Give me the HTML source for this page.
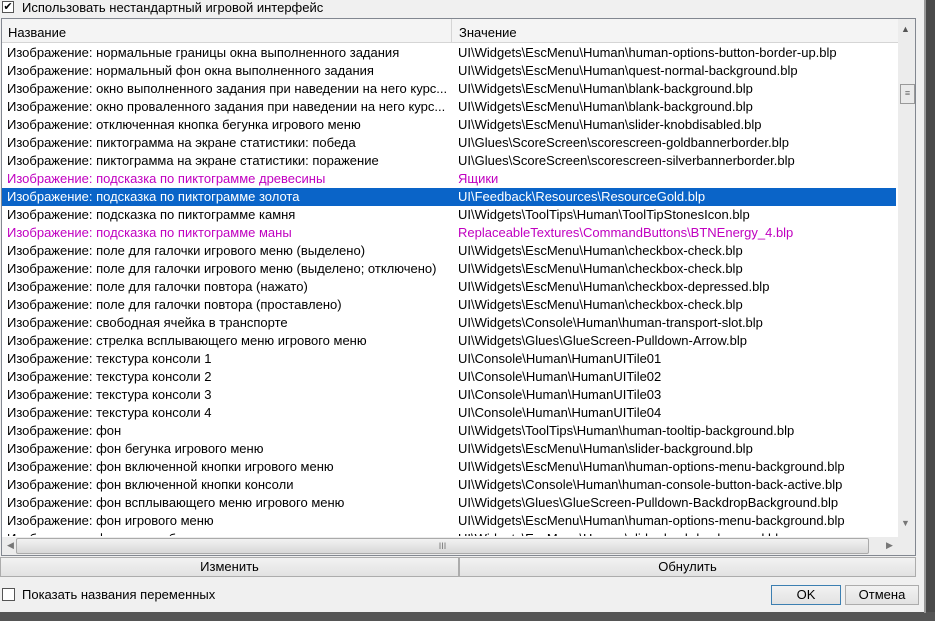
<!DOCTYPE html>
<html><head><meta charset="utf-8"><style>
*{box-sizing:border-box;margin:0;padding:0}
body{width:935px;height:621px;background:#f0f0f0;font-family:"Liberation Sans","DejaVu Sans",sans-serif;font-size:13px;color:#000;position:relative;overflow:hidden}
.abs{position:absolute}
.row{position:absolute;left:2px;width:894px;height:18px;line-height:18px;white-space:nowrap}
.row span{position:absolute}
.row .a{left:5px}.row .b{left:456px}
.m{color:#c000c0}
.sel{background:#0a64c8;color:#fff}
.btn{position:absolute;border:1px solid #acacac;background:linear-gradient(#f2f2f2,#e2e2e2);text-align:center;line-height:18px}
</style></head><body>
<div class="abs" style="left:926px;top:0;width:9px;height:621px;background:#4a4a4a"></div>
<div class="abs" style="left:0;top:612px;width:935px;height:9px;background:#555"></div>
<div class="abs" style="left:924px;top:0;width:2px;height:613px;background:#999"></div>
<div class="abs" style="left:2px;top:1px;width:12px;height:12px;border:1px solid #555;background:#fff;font-size:11px;line-height:10px;text-align:center">✔</div>
<div class="abs" style="left:22px;top:0;line-height:15px">Использовать нестандартный игровой интерфейс</div>
<div class="abs" style="left:1px;top:18px;width:915px;height:538px;border:1px solid #828790;background:#fff;overflow:hidden">
 <div class="abs" style="left:0;top:0;width:896px;height:24px;background:#f4f4f4;border-bottom:1px solid #d5d5d5"></div>
 <div class="abs" style="left:6px;top:6px">Название</div>
 <div class="abs" style="left:449px;top:0;width:1px;height:24px;background:#d5d5d5"></div>
 <div class="abs" style="left:457px;top:6px">Значение</div>
 <div class="abs" style="left:896px;top:0;width:17px;height:518px;background:#ececec"></div>
 <div class="abs" style="left:899px;top:5px;font-size:9px;color:#555">▲</div>
 <div class="abs" style="left:898px;top:65px;width:15px;height:20px;border:1px solid #999;background:#eaeaea;font-size:9px;text-align:center;line-height:17px;color:#666">≡</div>
 <div class="abs" style="left:899px;top:499px;font-size:9px;color:#777">▼</div>
 <div class="abs" style="left:0;top:518px;width:913px;height:18px;background:#ececec"></div>
 <div class="abs" style="left:5px;top:521px;font-size:9px;color:#777">◀</div>
 <div class="abs" style="left:14px;top:519px;width:853px;height:16px;border:1px solid #aaa;border-radius:2px;background:linear-gradient(#f2f2f2,#d8d8d8);text-align:center;font-size:9px;line-height:14px;color:#777">III</div>
 <div class="abs" style="left:884px;top:521px;font-size:9px;color:#777">▶</div>
</div>
<div style="position:absolute;left:1px;top:44px;width:896px;height:492px;overflow:hidden">
<div style="position:relative;left:-1px">
<div class="row" style="top:0"><span class="a">Изображение: нормальные границы окна выполненного задания</span><span class="b">UI\Widgets\EscMenu\Human\human-options-button-border-up.blp</span></div>
<div class="row" style="top:18px"><span class="a">Изображение: нормальный фон окна выполненного задания</span><span class="b">UI\Widgets\EscMenu\Human\quest-normal-background.blp</span></div>
<div class="row" style="top:36px"><span class="a">Изображение: окно выполненного задания при наведении на него курс...</span><span class="b">UI\Widgets\EscMenu\Human\blank-background.blp</span></div>
<div class="row" style="top:54px"><span class="a">Изображение: окно проваленного задания при наведении на него курс...</span><span class="b">UI\Widgets\EscMenu\Human\blank-background.blp</span></div>
<div class="row" style="top:72px"><span class="a">Изображение: отключенная кнопка бегунка игрового меню</span><span class="b">UI\Widgets\EscMenu\Human\slider-knobdisabled.blp</span></div>
<div class="row" style="top:90px"><span class="a">Изображение: пиктограмма на экране статистики: победа</span><span class="b">UI\Glues\ScoreScreen\scorescreen-goldbannerborder.blp</span></div>
<div class="row" style="top:108px"><span class="a">Изображение: пиктограмма на экране статистики: поражение</span><span class="b">UI\Glues\ScoreScreen\scorescreen-silverbannerborder.blp</span></div>
<div class="row m" style="top:126px"><span class="a">Изображение: подсказка по пиктограмме древесины</span><span class="b">Ящики</span></div>
<div class="row sel" style="top:144px"><span class="a">Изображение: подсказка по пиктограмме золота</span><span class="b">UI\Feedback\Resources\ResourceGold.blp</span></div>
<div class="row" style="top:162px"><span class="a">Изображение: подсказка по пиктограмме камня</span><span class="b">UI\Widgets\ToolTips\Human\ToolTipStonesIcon.blp</span></div>
<div class="row m" style="top:180px"><span class="a">Изображение: подсказка по пиктограмме маны</span><span class="b">ReplaceableTextures\CommandButtons\BTNEnergy_4.blp</span></div>
<div class="row" style="top:198px"><span class="a">Изображение: поле для галочки игрового меню (выделено)</span><span class="b">UI\Widgets\EscMenu\Human\checkbox-check.blp</span></div>
<div class="row" style="top:216px"><span class="a">Изображение: поле для галочки игрового меню (выделено; отключено)</span><span class="b">UI\Widgets\EscMenu\Human\checkbox-check.blp</span></div>
<div class="row" style="top:234px"><span class="a">Изображение: поле для галочки повтора (нажато)</span><span class="b">UI\Widgets\EscMenu\Human\checkbox-depressed.blp</span></div>
<div class="row" style="top:252px"><span class="a">Изображение: поле для галочки повтора (проставлено)</span><span class="b">UI\Widgets\EscMenu\Human\checkbox-check.blp</span></div>
<div class="row" style="top:270px"><span class="a">Изображение: свободная ячейка в транспорте</span><span class="b">UI\Widgets\Console\Human\human-transport-slot.blp</span></div>
<div class="row" style="top:288px"><span class="a">Изображение: стрелка всплывающего меню игрового меню</span><span class="b">UI\Widgets\Glues\GlueScreen-Pulldown-Arrow.blp</span></div>
<div class="row" style="top:306px"><span class="a">Изображение: текстура консоли 1</span><span class="b">UI\Console\Human\HumanUITile01</span></div>
<div class="row" style="top:324px"><span class="a">Изображение: текстура консоли 2</span><span class="b">UI\Console\Human\HumanUITile02</span></div>
<div class="row" style="top:342px"><span class="a">Изображение: текстура консоли 3</span><span class="b">UI\Console\Human\HumanUITile03</span></div>
<div class="row" style="top:360px"><span class="a">Изображение: текстура консоли 4</span><span class="b">UI\Console\Human\HumanUITile04</span></div>
<div class="row" style="top:378px"><span class="a">Изображение: фон</span><span class="b">UI\Widgets\ToolTips\Human\human-tooltip-background.blp</span></div>
<div class="row" style="top:396px"><span class="a">Изображение: фон бегунка игрового меню</span><span class="b">UI\Widgets\EscMenu\Human\slider-background.blp</span></div>
<div class="row" style="top:414px"><span class="a">Изображение: фон включенной кнопки игрового меню</span><span class="b">UI\Widgets\EscMenu\Human\human-options-menu-background.blp</span></div>
<div class="row" style="top:432px"><span class="a">Изображение: фон включенной кнопки консоли</span><span class="b">UI\Widgets\Console\Human\human-console-button-back-active.blp</span></div>
<div class="row" style="top:450px"><span class="a">Изображение: фон всплывающего меню игрового меню</span><span class="b">UI\Widgets\Glues\GlueScreen-Pulldown-BackdropBackground.blp</span></div>
<div class="row" style="top:468px"><span class="a">Изображение: фон игрового меню</span><span class="b">UI\Widgets\EscMenu\Human\human-options-menu-background.blp</span></div>
<div class="row" style="top:486px"><span class="a">Изображение: фон кнопки бегунка</span><span class="b">UI\Widgets\EscMenu\Human\slider-knob-background.blp</span></div>
</div></div>
<div class="btn" style="left:0;top:557px;width:459px;height:20px">Изменить</div>
<div class="btn" style="left:459px;top:557px;width:457px;height:20px">Обнулить</div>
<div class="abs" style="left:2px;top:588px;width:13px;height:13px;border:1px solid #555;background:#fff"></div>
<div class="abs" style="left:22px;top:587px">Показать названия переменных</div>
<div class="btn" style="left:771px;top:585px;width:70px;height:20px;border-color:#3c7fb1">OK</div>
<div class="btn" style="left:845px;top:585px;width:74px;height:20px">Отмена</div>
</body></html>
